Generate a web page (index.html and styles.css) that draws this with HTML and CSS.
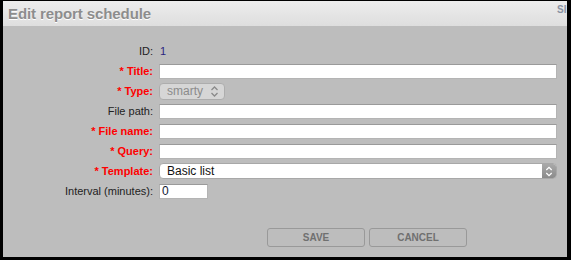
FILE: index.html
```html
<!DOCTYPE html>
<html>
<head>
<meta charset="utf-8">
<link rel="stylesheet" href="styles.css">
</head>
<body>
<div class="dialog">
  <div class="header">
    <span class="title">Edit report schedule</span>
    <span class="clip">Sl</span>
  </div>
  <div class="form">
    <div class="label">ID:</div><div class="value">1</div>
    <div class="label req">* Title:</div><div class="field"><span class="input wide"></span></div>
    <div class="label req">* Type:</div>
    <div class="field">
      <span class="select-small">smarty
        <svg class="chev" width="9" height="11" viewBox="0 0 9 11"><path d="M1.5 4 L4.5 1 L7.5 4 M1.5 7 L4.5 10 L7.5 7" fill="none" stroke="#8a8a8a" stroke-width="1.3"/></svg>
      </span>
    </div>
    <div class="label">File path:</div><div class="field"><span class="input wide"></span></div>
    <div class="label req">* File name:</div><div class="field"><span class="input wide"></span></div>
    <div class="label req">* Query:</div><div class="field"><span class="input wide"></span></div>
    <div class="label req">* Template:</div>
    <div class="field">
      <span class="select-wide"><span class="sel-text">Basic list</span>
        <span class="sel-btn"><svg width="8" height="11" viewBox="0 0 8 11"><path d="M1.3 4 L4 1.3 L6.7 4 M1.3 7 L4 9.7 L6.7 7" fill="none" stroke="#fff" stroke-width="1.3"/></svg></span>
      </span>
    </div>
    <div class="label">Interval (minutes):</div><div class="field"><span class="input short">0</span></div>
  </div>
  <div class="buttons">
    <span class="btn">SAVE</span>
    <span class="btn">CANCEL</span>
  </div>
</div>
</body>
</html>
```
FILE: styles.css
```css
html, body { margin: 0; padding: 0; }
body {
  background: #000;
  width: 571px;
  height: 260px;
  overflow: hidden;
  font-family: "Liberation Sans", Arial, sans-serif;
}
.dialog {
  margin: 1px 4px 0 3px;
  width: 564px;
  height: 256px;
  background: #bdbdbd;
  overflow: hidden;
  position: relative;
}
.header {
  height: 25px;
  background: linear-gradient(#ededed, #dedede);
  position: relative;
  display: flex;
  align-items: center;
}
.title {
  margin-left: 5px;
  font-size: 15px;
  font-weight: bold;
  color: #8d8d8d;
  text-shadow: 0 1px 0 #fff;
  letter-spacing: -0.1px;
}
.clip {
  position: absolute;
  left: 554px;
  top: 3px;
  font-size: 10px;
  font-weight: bold;
  color: #8a93a3;
}
.form {
  display: grid;
  grid-template-columns: 150px 398px;
  column-gap: 6px;
  grid-auto-rows: 20px;
  padding-top: 15px;
  font-size: 11px;
}
.label {
  text-align: right;
  color: #222;
  display: flex;
  align-items: center;
  justify-content: flex-end;
}
.label.req {
  color: #f00;
  font-weight: bold;
}
.value {
  color: #2b2480;
  display: flex;
  align-items: center;
  padding-left: 1px;
}
.field {
  display: flex;
  align-items: center;
}
.input {
  display: block;
  height: 15px;
  box-sizing: border-box;
  background: #fff;
  border: 1px solid #b4b4b4;
  border-top-color: #9a9a9a;
  font-size: 12px;
  line-height: 13px;
  padding-left: 2px;
  color: #111833;
}
.input.wide { width: 398px; }
.input.short { width: 49px; }
.select-small {
  position: relative;
  width: 66px;
  height: 17px;
  box-sizing: border-box;
  border: 1px solid #adadad;
  border-radius: 4px;
  background: #d6d6d6;
  color: #8b8b8b;
  font-size: 12px;
  line-height: 15px;
  padding-left: 7px;
}
.chev {
  position: absolute;
  right: 5px;
  top: 2px;
}
.select-wide {
  display: flex;
  width: 399px;
  height: 16px;
  box-sizing: border-box;
  border: 1px solid #a8a8a8;
  border-radius: 4px;
  background: #fff;
  overflow: hidden;
}
.sel-text {
  flex: 1;
  font-size: 12px;
  line-height: 14px;
  padding-left: 7px;
  color: #111;
}
.sel-btn {
  width: 14px;
  background: linear-gradient(#a9a9a9, #8b8b8b);
  display: flex;
  align-items: center;
  justify-content: center;
}
.buttons {
  display: flex;
  gap: 4px;
  margin-top: 27px;
  margin-left: 264px;
}
.btn {
  width: 98px;
  height: 19px;
  box-sizing: border-box;
  border: 1px solid #999;
  border-radius: 3px;
  display: flex;
  align-items: center;
  justify-content: center;
  font-size: 10px;
  font-weight: bold;
  color: #707070;
}
```
